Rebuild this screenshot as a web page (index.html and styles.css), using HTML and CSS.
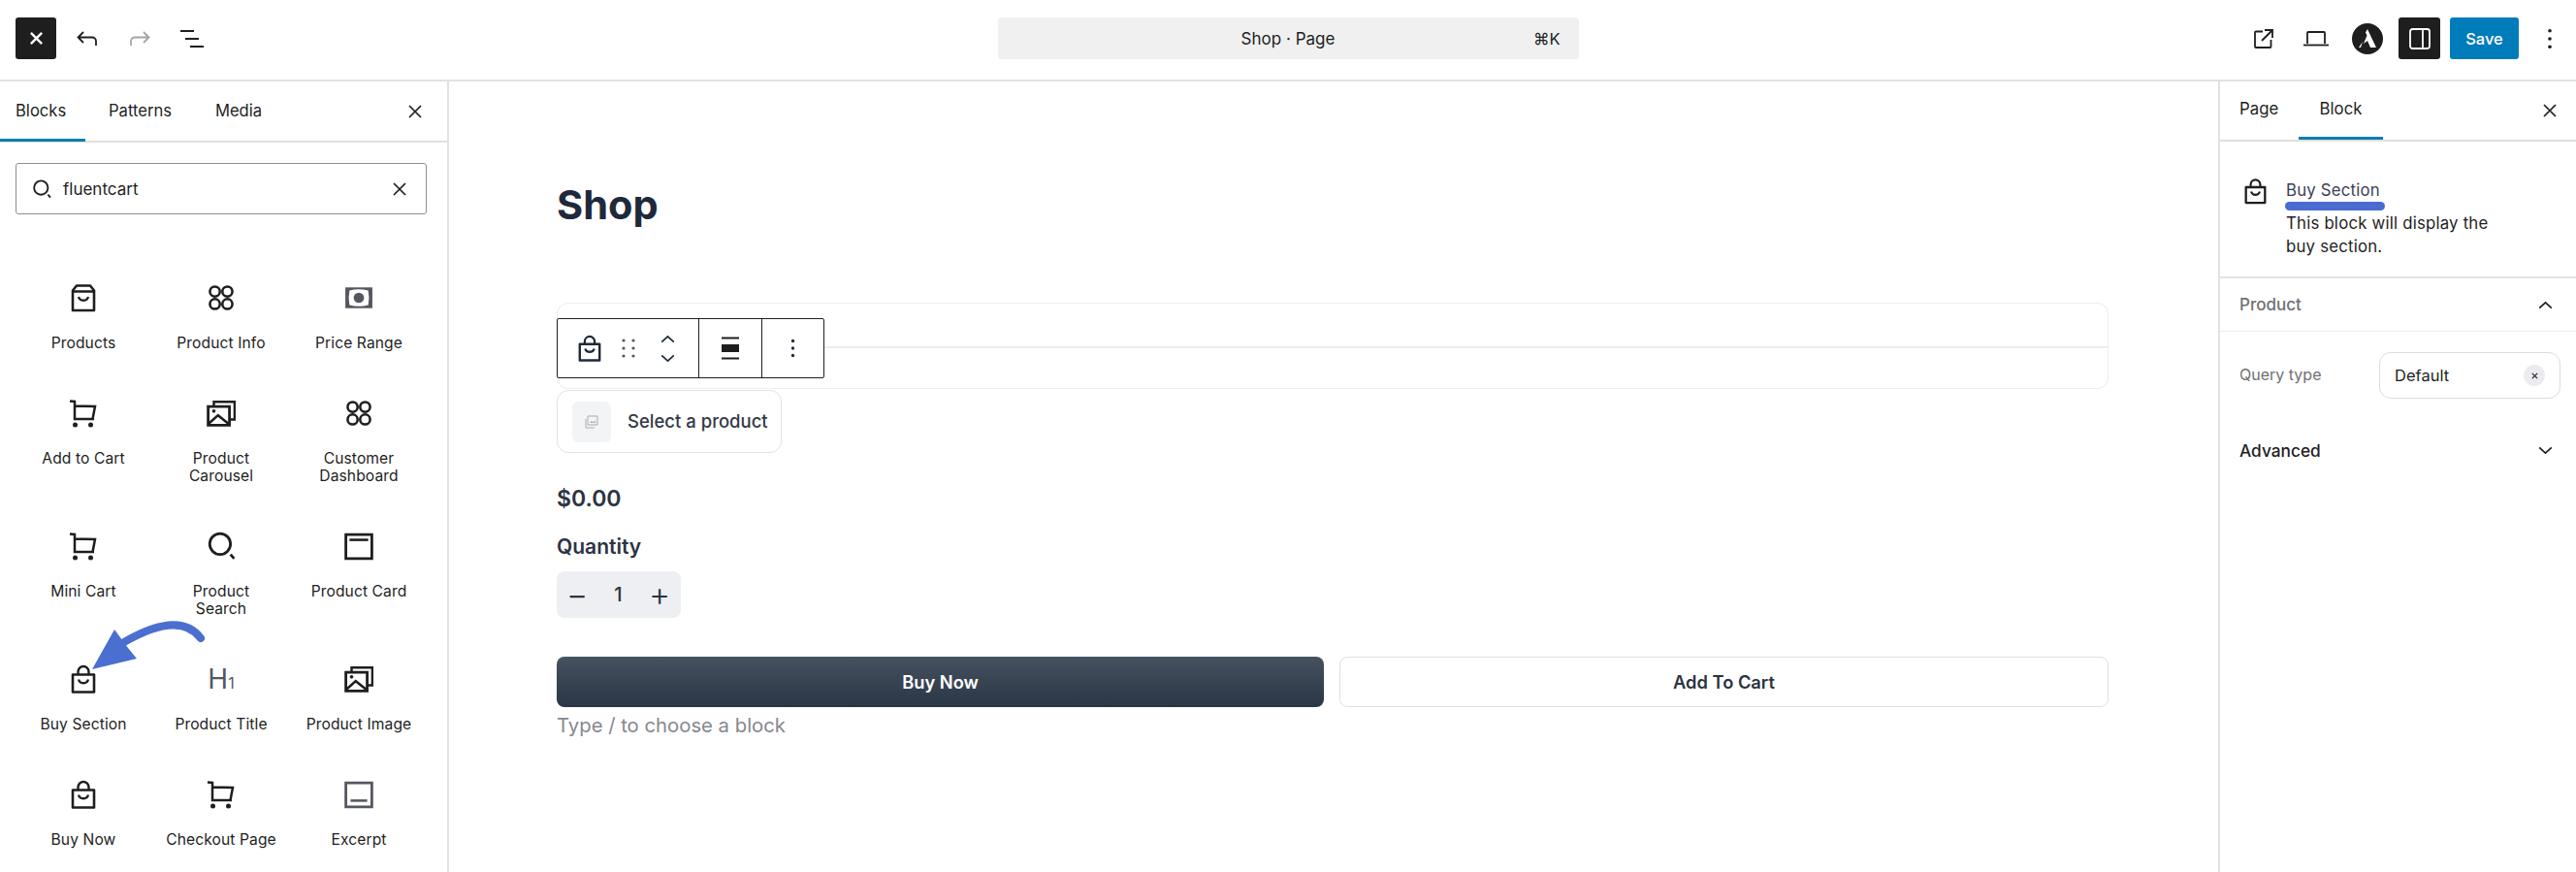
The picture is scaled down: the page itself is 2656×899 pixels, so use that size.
FILE: index.html
```html
<!DOCTYPE html>
<html lang="en">
<head>
<meta charset="utf-8">
<title>Shop · Page</title>
<link rel="stylesheet" href="styles.css">
</head>
<body>
<svg class="defs" width="0" height="0" aria-hidden="true">
  <symbol id="bag" viewBox="0 0 28 30"><path d="M3 10.500h22v18H3z" fill="none" stroke="currentColor" stroke-width="2.600" stroke-linejoin="round"/><path d="M8.500 10V7.500a5.500 5.500 0 0 1 11 0V10M9 15.500a5.200 5.200 0 0 0 10 0" fill="none" stroke="currentColor" stroke-width="2.400"/></symbol>
  <symbol id="products" viewBox="0 0 28 30"><path d="M3 28V7.500L7 2.500h14l4 5V28zM3 8.500h22" fill="none" stroke="currentColor" stroke-width="2.600" stroke-linejoin="round"/><path d="M9 14a5.200 5.200 0 0 0 10 0" fill="none" stroke="currentColor" stroke-width="2.400"/></symbol>
  <symbol id="info" viewBox="0 0 28 28"><g fill="none" stroke="currentColor" stroke-width="2.400"><circle cx="8" cy="8" r="4.800"/><circle cx="20" cy="8" r="4.800"/><circle cx="8" cy="20" r="4.800"/><circle cx="20" cy="20" r="4.800"/></g></symbol>
  <symbol id="money" viewBox="0 0 28 24"><path d="M1 2h26v20H1z" fill="#555760"/><path d="M5 5q9-2.500 18 0 1.500 7 0 14-9 2.500-18 0-1.500-7 0-14z" fill="#fff"/><circle cx="14" cy="12" r="5" fill="#555760"/></symbol>
  <symbol id="cart" viewBox="0 0 30 30"><path d="M1 2.500l5 .5v18h20M6 7.500l21 .5-2.500 13" fill="none" stroke="currentColor" stroke-width="2.500"/><circle cx="6.500" cy="27" r="2.500" fill="currentColor"/><circle cx="22.500" cy="27" r="2.500" fill="currentColor"/></symbol>
  <symbol id="gallery" viewBox="0 0 28 26"><path d="M7 6V2h20v17h-5" fill="none" stroke="currentColor" stroke-width="2.300"/><path d="M1.500 6.500h20.500v18H1.500z" fill="none" stroke="currentColor" stroke-width="2.600"/><path d="M2 23l9-8 10 8" fill="none" stroke="currentColor" stroke-width="2.400"/><circle cx="7" cy="11" r="1.700" fill="currentColor"/></symbol>
  <symbol id="search" viewBox="0 0 28 28"><circle cx="13" cy="12" r="10" fill="none" stroke="currentColor" stroke-width="2.600"/><path d="M23 22l3.500 4" fill="none" stroke="currentColor" stroke-width="2.600"/></symbol>
  <symbol id="card" viewBox="0 0 28 26"><path d="M1.500 2h25v23h-25z" fill="none" stroke="currentColor" stroke-width="2.600"/><path d="M5 7h18" stroke="currentColor" stroke-width="2.400"/></symbol>
  <symbol id="excerpt" viewBox="0 0 28 26"><path d="M1.500 2h25v23h-25z" fill="none" stroke="#555760" stroke-width="2.600"/><path d="M6 19h16" stroke="#555760" stroke-width="2.400"/></symbol>
  <symbol id="close" viewBox="0 0 16 16"><path d="M2 2l12 12M14 2L2 14" fill="none" stroke="currentColor" stroke-width="1.700"/></symbol>
  <symbol id="close-heavy" viewBox="0 0 16 16"><path d="M2 2l12 12M14 2L2 14" fill="none" stroke="currentColor" stroke-width="2.600"/></symbol>
  <symbol id="kebab" viewBox="0 0 6 24"><circle cx="3" cy="3" r="2" fill="currentColor"/><circle cx="3" cy="12" r="2" fill="currentColor"/><circle cx="3" cy="21" r="2" fill="currentColor"/></symbol>
  <symbol id="up" viewBox="0 0 16 10"><path d="M1 8.500L8 2l7 6.500" fill="none" stroke="currentColor" stroke-width="1.900"/></symbol>
  <symbol id="down" viewBox="0 0 16 10"><path d="M1 1.500L8 8l7-6.500" fill="none" stroke="currentColor" stroke-width="1.900"/></symbol>
</svg>

<div class="app">
  <header class="topbar">
    <div class="top-left">
      <button class="top-toggle"><svg class="close-bold"><use href="#close-heavy"/></svg></button>
      <span class="top-icon"><svg width="22" height="16" viewBox="0 0 22 16"><path d="M7 1L1.500 6.500 7 12M2 6.500h14a4 4 0 0 1 4 4V15" fill="none" stroke="#1e1e1e" stroke-width="1.800"/></svg></span>
      <span class="top-icon"><svg width="22" height="16" viewBox="0 0 22 16"><path d="M15 1l5.500 5.500L15 12M20 6.500H6a4 4 0 0 0-4 4V15" fill="none" stroke="#a4a4a4" stroke-width="1.800"/></svg></span>
      <span class="top-icon"><svg width="24" height="18" viewBox="0 0 24 18"><path d="M0 1h14M5 9h14M10 17h14" stroke="#1e1e1e" stroke-width="2"/></svg></span>
    </div>
    <div class="command"><span class="command-title">Shop · Page</span><span class="command-key">⌘K</span></div>
    <div class="top-right">
      <span class="top-icon"><svg width="20" height="20" viewBox="0 0 20 20"><path d="M9 2.500H2a1 1 0 0 0-1 1V18a1 1 0 0 0 1 1h14.500a1 1 0 0 0 1-1v-7" fill="none" stroke="#1e1e1e" stroke-width="1.800"/><path d="M8 12L19 1M11 1h8v8" fill="none" stroke="#1e1e1e" stroke-width="1.800"/></svg></span>
      <span class="top-icon"><svg width="26" height="16" viewBox="0 0 26 16"><path d="M4 13V2a1 1 0 0 1 1-1h16a1 1 0 0 1 1 1v11" fill="none" stroke="#1e1e1e" stroke-width="1.800"/><path d="M0 14.500h26" stroke="#1e1e1e" stroke-width="1.800"/></svg></span>
      <span class="astra"><svg width="32" height="32" viewBox="0 0 32 32"><circle cx="16" cy="16" r="16" fill="#1e1e1e"/><path d="M16 6l9 19h-6l-3-7-4 3 3.500-8.500-1.500-3zM11 19l-2 6H7z" fill="#fff"/></svg></span>
      <button class="top-toggle panel"><svg width="22" height="22" viewBox="0 0 22 22"><rect x="1" y="1" width="20" height="20" rx="2.500" fill="none" stroke="#fff" stroke-width="1.800"/><path d="M14 1v20" stroke="#fff" stroke-width="1.800"/></svg></button>
      <button class="save">Save</button>
      <span class="top-icon"><svg class="kebab-lg"><use href="#kebab"/></svg></span>
    </div>
  </header>

  <div class="workspace">
    <aside class="inserter">
      <div class="tabs">
        <span class="tab tab-active">Blocks</span>
        <span class="tab">Patterns</span>
        <span class="tab">Media</span>
        <svg class="i14 tabs-close"><use href="#close"/></svg>
      </div>
      <div class="searchbox">
        <svg class="search-icon"><use href="#search"/></svg>
        <span class="search-text">fluentcart</span>
        <svg class="i14"><use href="#close"/></svg>
      </div>
      <div class="block-grid">
        <div class="block"><svg class="bi"><use href="#products"/></svg><span>Products</span></div>
        <div class="block"><svg class="bi"><use href="#info"/></svg><span>Product Info</span></div>
        <div class="block"><svg class="bi"><use href="#money"/></svg><span>Price Range</span></div>
        <div class="block"><svg class="bi"><use href="#cart"/></svg><span>Add to Cart</span></div>
        <div class="block"><svg class="bi"><use href="#gallery"/></svg><span>Product Carousel</span></div>
        <div class="block"><svg class="bi"><use href="#info"/></svg><span>Customer Dashboard</span></div>
        <div class="block"><svg class="bi"><use href="#cart"/></svg><span>Mini Cart</span></div>
        <div class="block"><svg class="bi"><use href="#search"/></svg><span>Product Search</span></div>
        <div class="block"><svg class="bi"><use href="#card"/></svg><span>Product Card</span></div>
        <div class="block"><svg class="bi"><use href="#bag"/></svg><span>Buy Section</span></div>
        <div class="block"><div class="bi h1">H<small>1</small></div><span>Product Title</span></div>
        <div class="block"><svg class="bi"><use href="#gallery"/></svg><span>Product Image</span></div>
        <div class="block"><svg class="bi"><use href="#bag"/></svg><span>Buy Now</span></div>
        <div class="block"><svg class="bi"><use href="#cart"/></svg><span>Checkout Page</span></div>
        <div class="block"><svg class="bi"><use href="#excerpt"/></svg><span>Excerpt</span></div>
      </div>
      <svg class="arrow" width="130" height="64" viewBox="0 0 130 64"><path d="M112 22C100 6 78 0 33 26" fill="none" stroke="#4a6fd1" stroke-width="8" stroke-linecap="round"/><path d="M0 54L23 13l14 19 9 11z" fill="#4a6fd1"/></svg>
    </aside>

    <main class="canvas">
      <h1 class="page-title">Shop</h1>
      <div class="product-stack">
        <div class="ghost-row"></div>
        <div class="ghost-row ghost-second"></div>
        <div class="block-toolbar">
          <div class="tool-group tool-wide">
            <svg class="tool-bag"><use href="#bag"/></svg>
            <svg width="14" height="20" viewBox="0 0 14 20"><g fill="#555"><circle cx="2" cy="2" r="1.600"/><circle cx="12" cy="2" r="1.600"/><circle cx="2" cy="10" r="1.600"/><circle cx="12" cy="10" r="1.600"/><circle cx="2" cy="18" r="1.600"/><circle cx="12" cy="18" r="1.600"/></g></svg>
            <div class="movers"><svg class="chev"><use href="#up"/></svg><svg class="chev"><use href="#down"/></svg></div>
          </div>
          <div class="tool-group"><svg width="20" height="24" viewBox="0 0 20 24"><path d="M1 1.500h18M1 22.500h18" stroke="#1e1e1e" stroke-width="2"/><path d="M1 8h18v8H1z" fill="#1e1e1e"/></svg></div>
          <div class="tool-group tool-last"><svg class="kebab-sm"><use href="#kebab"/></svg></div>
        </div>
      </div>
      <div class="product-select">
        <span class="thumb"><svg width="14" height="14" viewBox="0 0 14 14"><path d="M3 1h10v9H3zM1 4v9h9" fill="none" stroke="#a7adb5" stroke-width="1"/><path d="M5 8l2-2 2 1.500L11 5v3z" fill="#a7adb5"/></svg></span>
        <span class="select-text">Select a product</span>
      </div>
      <div class="price">$0.00</div>
      <div class="qty-label">Quantity</div>
      <div class="stepper"><span class="step">−</span><span class="step-value">1</span><span class="step">+</span></div>
      <div class="actions">
        <button class="btn btn-buy">Buy Now</button>
        <button class="btn btn-cart">Add To Cart</button>
      </div>
      <div class="placeholder">Type / to choose a block</div>
    </main>

    <aside class="settings">
      <div class="tabs settings-tabs">
        <span class="stab">Page</span>
        <span class="stab stab-active">Block</span>
        <svg class="i14 tabs-close"><use href="#close"/></svg>
      </div>
      <div class="block-card">
        <svg class="card-bag"><use href="#bag"/></svg>
        <div class="card-body">
          <div class="card-title">Buy Section</div>
          <div class="card-mark"></div>
          <p class="card-desc">This block will display the buy section.</p>
        </div>
      </div>
      <div class="panel-head"><span class="panel-title muted">Product</span><svg class="chev-lg"><use href="#up"/></svg></div>
      <div class="panel-field">
        <span class="field-label">Query type</span>
        <div class="select"><span>Default</span><span class="clear"><svg width="7" height="7" viewBox="0 0 16 16"><path d="M2 2l12 12M14 2L2 14" stroke="#1e1e1e" stroke-width="2.500"/></svg></span></div>
      </div>
      <div class="panel-head panel-advanced"><span class="panel-title">Advanced</span><svg class="chev-lg"><use href="#down"/></svg></div>
    </aside>
  </div>
</div>
</body>
</html>
```

FILE: styles.css
```css
* { box-sizing: border-box; }
html, body { margin: 0; height: 899px; overflow: hidden; background: #fff; }
body { font-family: Inter, "Liberation Sans", sans-serif; color: #1e1e1e; font-size: 16px; }
.defs { position: absolute; }
button { font: inherit; border: 0; padding: 0; }

.app { display: flex; flex-direction: column; height: 899px; }

.topbar { height: 84px; flex: none; display: grid; grid-template-columns: 1fr 599px 1fr; align-items: center; border-bottom: 2px solid #e2e2e2; padding-bottom: 3px; }
.top-left { display: flex; align-items: center; padding-left: 16px; }
.top-right { display: flex; align-items: center; justify-content: flex-end; }
.top-toggle { width: 42px; height: 43px; background: #1e1e1e; color: #fff; border-radius: 3px; display: flex; align-items: center; justify-content: center; flex: none; }
.top-icon { width: 54px; height: 43px; display: flex; align-items: center; justify-content: center; color: #1e1e1e; flex: none; }
.top-left .top-toggle { margin-right: 5px; }
.astra { width: 52px; display: flex; justify-content: center; flex: none; }
.panel { width: 43px; margin-left: 6px; }
.save { width: 71px; height: 43px; margin: 0 5px 0 10px; background: #007cba; color: #fff; border-radius: 3px; font-size: 16.500px; font-weight: 500; flex: none; }
.kebab-lg { width: 6px; height: 22px; }
.i14 { width: 16px; height: 16px; flex: none; }
.close-bold { width: 15px; height: 15px; margin-top: -1px; }

.command { height: 43px; background: #f0f0f0; border-radius: 4px; display: flex; align-items: center; justify-content: center; position: relative; font-size: 17px; }
.command-key { position: absolute; right: 19px; font-size: 16.500px; }

.workspace { flex: 1; display: flex; min-height: 0; }

.inserter { width: 463px; flex: none; border-right: 2px solid #e2e2e2; position: relative; overflow: hidden; }
.tabs { height: 63px; display: flex; align-items: stretch; border-bottom: 2px solid #e0e0e0; position: relative; }
.tab { display: flex; align-items: center; padding: 0 16px 2px; font-size: 16.600px; color: #1e1e1e; height: 62px; }
.tab-active { width: 88px; box-shadow: inset 0 -3px 0 #0a7fb0; padding-right: 0; margin-right: 8px; }
.tab-active + .tab { margin-right: 13px; }
.tabs-close { position: absolute; right: 25px; top: 23px; width: 16px; height: 16px; }

.searchbox { margin: 21px 0 0 16px; width: 424px; height: 53px; border: 1px solid #8f8f8f; border-radius: 3px; display: flex; align-items: center; padding: 0 19px 0 16px; }
.search-icon { width: 20px; height: 20px; margin-right: 12px; flex: none; }
.search-text { flex: 1; font-size: 17px; }

.block-grid { display: grid; grid-template-columns: repeat(3, 142px); padding: 71px 0 0 15px; align-items: start; }
.block { display: flex; flex-direction: column; align-items: center; text-align: center; padding-bottom: 48px; font-size: 15.600px; line-height: 18px; letter-spacing: .1px; color: #1e1e1e; }
.block span { padding: 0 14px; }
.bi { width: 30px; height: 30px; margin-bottom: 23px; display: block; }
.h1 { color: #555760; font-size: 28px; line-height: 30px; font-weight: 400; white-space: nowrap; text-align: center; }
.h1 small { font-size: 16px; }
.arrow { position: absolute; left: 95px; top: 552px; }

.canvas { flex: 1; min-width: 0; padding: 102px 113px 0 111px; color: #1f2937; }
.page-title { margin: 0; font-size: 41.500px; line-height: 50px; font-weight: 700; color: #1e293b; }
.product-stack { position: relative; margin-top: 76px; height: 90px; }
.ghost-row { height: 46px; border: 1px solid #ededed; border-radius: 12px 12px 0 0; border-bottom: 0; }
.ghost-second { height: 44px; border-radius: 0 0 12px 12px; border: 1px solid #ededed; border-top-width: 2px; margin-top: -1px; }
.block-toolbar { position: absolute; left: 0; top: 16px; height: 62px; display: flex; border: 1px solid #1e1e1e; border-radius: 2px; background: #fff; }
.tool-group { width: 65px; display: flex; align-items: center; justify-content: center; border-left: 1px solid #1e1e1e; }
.tool-last { width: 64px; }
.tool-wide { width: 145px; border-left: 0; justify-content: flex-start; padding-left: 20px; gap: 20px; }
.tool-bag { width: 26px; height: 28px; }
.movers { display: flex; flex-direction: column; gap: 11px; margin-left: 6px; }
.chev { width: 15px; height: 9px; display: block; }
.kebab-sm { width: 5px; height: 20px; }

.product-select { width: 232px; height: 65px; border: 1px solid #e2e2e2; border-radius: 12px; display: flex; align-items: center; padding: 0 8px 0 15px; gap: 17px; font-size: 18.500px; font-weight: 500; color: #333a47; white-space: nowrap; }
.select-text { margin-top: -2px; }
.thumb { width: 40px; height: 42px; background: #f3f4f6; border-radius: 6px; display: flex; align-items: center; justify-content: center; flex: none; }
.price { margin-top: 32px; font-size: 23px; line-height: 30px; font-weight: 600; color: #2b3342; }
.qty-label { margin-top: 23px; font-size: 21px; line-height: 24px; font-weight: 600; color: #2b3342; }
.stepper { margin-top: 13px; width: 128px; height: 48px; background: #eeeff2; border-radius: 8px; display: flex; align-items: center; justify-content: space-between; padding: 0 9px 0 8px; font-size: 20px; font-weight: 500; color: #2b3342; }
.step { width: 26px; text-align: center; font-size: 34px; font-weight: 300; line-height: 30px; }
.actions { margin-top: 40px; display: flex; gap: 16px; }
.btn { flex: 1; height: 52px; border-radius: 8px; font-size: 18.300px; font-weight: 600; }
.btn-buy { background: linear-gradient(#465260, #2a3545); color: #fff; }
.btn-cart { background: #fff; border: 1px solid #dcdfe4; color: #2b3342; }
.placeholder { margin-top: 7px; font-size: 20.300px; line-height: 24px; color: #85888e; }

.settings { width: 369px; flex: none; border-left: 2px solid #e2e2e2; }
.settings-tabs { height: 62px; padding-left: 20px; }
.stab { display: flex; align-items: center; font-size: 16.800px; padding-bottom: 4px; }
.stab:first-child { width: 61px; }
.stab-active { width: 87px; justify-content: center; box-shadow: inset 0 -3px 0 #0a7fb0; }
.settings-tabs .tabs-close { right: 19px; top: 22px; }

.block-card { height: 141px; border-bottom: 2px solid #e2e2e2; display: flex; padding: 38px 22px 0 24px; gap: 19px; }
.card-bag { width: 25px; height: 28px; flex: none; margin-top: -1px; }
.card-title { font-size: 16.800px; line-height: 24px; color: #3b3f58; letter-spacing: .2px; }
.card-mark { width: 103px; height: 9px; border-radius: 5px; background: #4a6bd0; margin: 0 0 1px -1px; }
.card-desc { margin: 0; width: 240px; font-size: 16.800px; line-height: 24px; letter-spacing: .2px; }

.panel-head { height: 55px; display: flex; align-items: center; justify-content: space-between; padding: 0 24px 0 20px; border-bottom: 1px solid #ededed; }
.panel-title { font-size: 17px; font-weight: 500; }
.muted { color: #6f6f73; font-weight: 500; }
.chev-lg { width: 15px; height: 9px; }
.panel-field { display: flex; align-items: center; justify-content: space-between; padding: 21px 16px 0 20px; }
.field-label { font-size: 16px; color: #6f6f73; margin-top: -2px; }
.select { width: 187px; height: 48px; border: 1px solid #dddddf; border-radius: 12px; display: flex; align-items: center; justify-content: space-between; padding: 0 15px; font-size: 16.500px; }
.clear { width: 22px; height: 22px; border-radius: 50%; background: #ececf0; display: flex; align-items: center; justify-content: center; }
.panel-advanced { border-bottom: 0; margin-top: 26px; }
.panel-advanced .panel-title { font-size: 17.300px; }
```
